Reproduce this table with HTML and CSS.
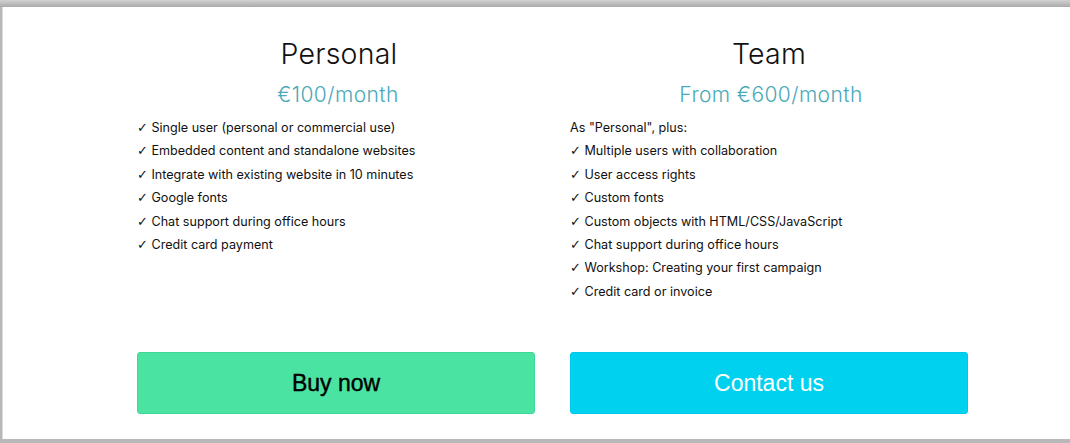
FILE: index.html
```html
<!DOCTYPE html>
<html>
<head>
<meta charset="utf-8">
<link rel="stylesheet" href="styles.css">
</head>
<body>
<div class="frame">
  <div class="card">
    <div class="plans">
      <section class="plan">
        <h2 class="title title-personal">Personal</h2>
        <div class="price">€100/month</div>
        <ul class="features">
          <li><span class="check">✓</span> Single user (personal or commercial use)</li>
          <li><span class="check">✓</span> Embedded content and standalone websites</li>
          <li><span class="check">✓</span> Integrate with existing website in 10 minutes</li>
          <li><span class="check">✓</span> Google fonts</li>
          <li><span class="check">✓</span> Chat support during office hours</li>
          <li><span class="check">✓</span> Credit card payment</li>
        </ul>
        <button class="btn btn-buy">Buy now</button>
      </section>
      <section class="plan">
        <h2 class="title">Team</h2>
        <div class="price">From €600/month</div>
        <ul class="features">
          <li>As "Personal", plus:</li>
          <li><span class="check">✓</span> Multiple users with collaboration</li>
          <li><span class="check">✓</span> User access rights</li>
          <li><span class="check">✓</span> Custom fonts</li>
          <li><span class="check">✓</span> Custom objects with HTML/CSS/JavaScript</li>
          <li><span class="check">✓</span> Chat support during office hours</li>
          <li><span class="check">✓</span> Workshop: Creating your first campaign</li>
          <li><span class="check">✓</span> Credit card or invoice</li>
        </ul>
        <button class="btn btn-contact">Contact us</button>
      </section>
    </div>
  </div>
</div>
</body>
</html>
```
FILE: styles.css
```css
* { box-sizing: border-box; }
html, body { margin: 0; padding: 0; }
body {
  width: 1070px;
  height: 443px;
  overflow: hidden;
  background: linear-gradient(#d2d2d2, #a9a9a9 7px, #b8b8b8 7px);
  font-family: "Inter", "Roboto", sans-serif;
}
.frame {
  padding: 7px 0 4px 3px;
  height: 443px;
}
.card {
  background: #fff;
  height: 100%;
  box-shadow: -1px 0 0 #dcdcdc;
}
.plans {
  display: grid;
  grid-template-columns: 398px 398px;
  column-gap: 35px;
  padding-left: 134px;
}
.plan {
  display: flex;
  flex-direction: column;
  height: 432px;
}
.title {
  margin: 29px 0 0;
  text-align: center;
  font-family: "Inter", sans-serif;
  font-weight: 300;
  font-size: 28.5px;
  line-height: 36px;
  color: #111;
  letter-spacing: 0.2px;
}
.title-personal {
  padding-left: 6px;
}
.price {
  margin-top: 10px;
  padding-left: 4px;
  text-align: center;
  font-family: "Inter", sans-serif;
  font-weight: 300;
  font-size: 21px;
  line-height: 26px;
  color: #4aa9b8;
  letter-spacing: 0.4px;
}
.features {
  list-style: none;
  margin: 8px 0 0;
  padding: 0;
  font-size: 12.6px;
  line-height: 23.4px;
  color: #111;
}
.features li {
  height: 23.4px;
}
.check {
  font-family: "DejaVu Sans", sans-serif;
  font-size: 13px;
  line-height: 0;
}
.btn {
  margin-top: auto;
  margin-bottom: 25px;
  height: 62px;
  width: 398px;
  border-radius: 3px;
  font-family: "Liberation Sans", Arial, sans-serif;
  font-size: 23px;
  cursor: pointer;
}
.btn-buy {
  background: #4be3a2;
  border: 1px solid #3fd795;
  color: #000;
  -webkit-text-stroke: 0.4px #000;
}
.btn-contact {
  background: #00d1ef;
  border: 1px solid #00c8e6;
  color: #fff;
}
```
